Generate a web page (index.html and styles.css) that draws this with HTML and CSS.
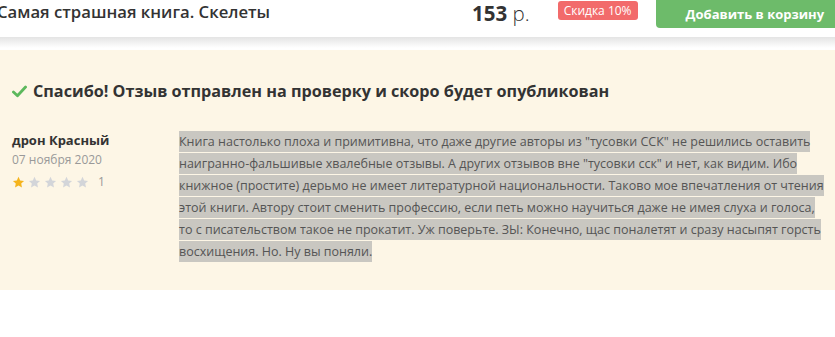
FILE: index.html
```html
<!DOCTYPE html>
<html lang="ru">
<head>
    <meta charset="UTF-8">
    <meta name="viewport" content="width=device-width, initial-scale=1.0">
    <title>Самая страшная книга. Скелеты</title>
    <link rel="stylesheet" href="styles.css">
</head>
<body>
<div class="buy-bar">
    <h1 class="buy-title">Самая страшная книга. Скелеты</h1>
    <div class="buy-price"><b>153</b> р.</div>
    <span class="buy-discount">Скидка 10%</span>
    <button class="buy-button">Добавить в корзину</button>
</div>
<div class="buy-shadow"></div>

<div class="review-box">
    <h2 class="review-success">
        <svg class="check-icon" viewBox="0 0 16 14" width="15" height="13">
            <path d="M1.5 7.5 L5.8 11.6 L14.5 2.2" fill="none" stroke="#5cb85c" stroke-width="3" stroke-linecap="round" stroke-linejoin="round"/>
        </svg>
        Спасибо! Отзыв отправлен на проверку и скоро будет опубликован
    </h2>

    <div class="review">
        <div class="review-author">
            <div class="author-name">дрон Красный</div>
            <div class="author-date">07 ноября 2020</div>
            <div class="author-rating">
                <span class="stars">
                    <svg class="star on" viewBox="0 0 24 24"><path d="M12 1.5l3.1 6.6 7.2.9-5.3 5 1.4 7.1L12 17.6l-6.4 3.5 1.4-7.1-5.3-5 7.2-.9z"/></svg>
                    <svg class="star" viewBox="0 0 24 24"><path d="M12 1.5l3.1 6.6 7.2.9-5.3 5 1.4 7.1L12 17.6l-6.4 3.5 1.4-7.1-5.3-5 7.2-.9z"/></svg>
                    <svg class="star" viewBox="0 0 24 24"><path d="M12 1.5l3.1 6.6 7.2.9-5.3 5 1.4 7.1L12 17.6l-6.4 3.5 1.4-7.1-5.3-5 7.2-.9z"/></svg>
                    <svg class="star" viewBox="0 0 24 24"><path d="M12 1.5l3.1 6.6 7.2.9-5.3 5 1.4 7.1L12 17.6l-6.4 3.5 1.4-7.1-5.3-5 7.2-.9z"/></svg>
                    <svg class="star" viewBox="0 0 24 24"><path d="M12 1.5l3.1 6.6 7.2.9-5.3 5 1.4 7.1L12 17.6l-6.4 3.5 1.4-7.1-5.3-5 7.2-.9z"/></svg>
                </span>
                <span class="rating-count">1</span>
            </div>
        </div>
        <div class="review-text">
            <span class="selected">Книга настолько плоха и примитивна, что даже другие авторы из "тусовки ССК" не решились оставить наигранно-фальшивые хвалебные отзывы. А других отзывов вне "тусовки сск" и нет, как видим. Ибо книжное (простите) дерьмо не имеет литературной национальности. Таково мое впечатления от чтения этой книги. Автору стоит сменить профессию, если петь можно научиться даже не имея слуха и голоса, то с писательством такое не прокатит. Уж поверьте. ЗЫ: Конечно, щас поналетят и сразу насыпят горсть восхищения. Но. Ну вы поняли.</span>
        </div>
    </div>
</div>
</body>
</html>
```

FILE: styles.css
```css
* {
    margin: 0;
    padding: 0;
    box-sizing: border-box;
}

body {
    font-family: 'Open Sans', 'Liberation Sans', sans-serif;
    background: #fff;
    color: #333;
    overflow-x: hidden;
}

.buy-bar {
    display: flex;
    align-items: flex-start;
    height: 37px;
    background: #fff;
    white-space: nowrap;
    overflow: hidden;
}

.buy-bar > * {
    flex-shrink: 0;
}

.buy-title {
    width: 475px;
    margin-left: -3px;
    font-size: 16.7px;
    font-weight: 600;
    line-height: 24px;
    color: #333;
}

.buy-price {
    font-size: 20.5px;
    font-weight: 300;
    line-height: 26px;
    color: #333;
}

.buy-price b {
    font-weight: 700;
}

.buy-discount {
    margin: 1px 0 0 28px;
    width: 80px;
    height: 19px;
    line-height: 19px;
    text-align: center;
    background: #f26b6b;
    color: #fff;
    font-size: 12px;
    border-radius: 3px;
}

.buy-button {
    margin-left: 18px;
    height: 28px;
    padding: 0 30px;
    border: 0;
    border-radius: 0 0 0 4px;
    background: #6dbb6a;
    color: #fff;
    font-family: inherit;
    font-size: 13px;
    font-weight: 700;
}

.buy-shadow {
    height: 13px;
    background: linear-gradient(#e4e4e4, #fff 85%);
}

.review-box {
    background: #fdf6e6;
    padding: 30px 0 27px 12px;
}

.review-success {
    display: flex;
    align-items: center;
    gap: 6px;
    font-size: 16.2px;
    font-weight: 700;
    line-height: 22px;
    color: #333;
}

.check-icon {
    flex-shrink: 0;
}

.review {
    display: flex;
    margin-top: 29px;
}

.review-author {
    width: 167px;
    flex-shrink: 0;
}

.author-name {
    font-size: 13px;
    font-weight: 700;
    line-height: 18px;
    color: #333;
}

.author-date {
    font-size: 12px;
    line-height: 22px;
    color: #999;
}

.author-rating {
    display: flex;
    align-items: center;
    gap: 9px;
    margin-top: 2px;
}

.stars {
    display: flex;
    gap: 3px;
}

.star {
    width: 13px;
    height: 13px;
    fill: #d3d5d9;
}

.star.on {
    fill: #f5b41d;
}

.rating-count {
    font-size: 12px;
    line-height: 18px;
    color: #999;
}

.review-text {
    width: 650px;
    font-size: 12.5px;
    line-height: 22px;
    color: #555;
}

.selected {
    background: #c9c7c1;
    padding: 2px 0;
}
```
